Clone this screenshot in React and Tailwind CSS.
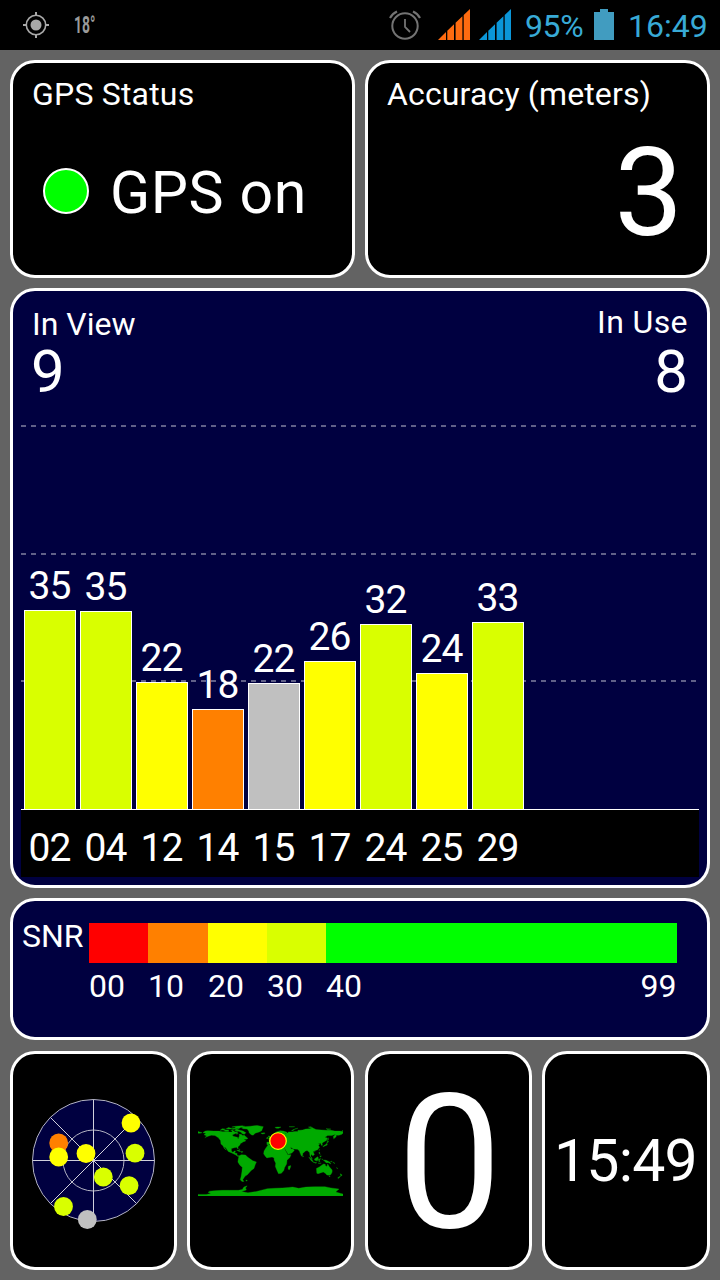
import React from 'react';

const SATELLITES = [
  { id: '02', snr: 35, height: 199, color: 'bg-[#d9ff00]' },
  { id: '04', snr: 35, height: 198, color: 'bg-[#d9ff00]' },
  { id: '12', snr: 22, height: 127, color: 'bg-[#ffff00]' },
  { id: '14', snr: 18, height: 100, color: 'bg-[#ff8000]' },
  { id: '15', snr: 22, height: 126, color: 'bg-[#c0c0c0]' },
  { id: '17', snr: 26, height: 148, color: 'bg-[#ffff00]' },
  { id: '24', snr: 32, height: 185, color: 'bg-[#d9ff00]' },
  { id: '25', snr: 24, height: 136, color: 'bg-[#ffff00]' },
  { id: '29', snr: 33, height: 187, color: 'bg-[#d9ff00]' },
];

const SNR_SCALE = [
  { label: '00', width: 'w-[59px]', color: 'bg-[#ff0000]' },
  { label: '10', width: 'w-[60px]', color: 'bg-[#ff8000]' },
  { label: '20', width: 'w-[59px]', color: 'bg-[#ffff00]' },
  { label: '30', width: 'w-[59px]', color: 'bg-[#d9ff00]' },
  { label: '40', width: 'w-[350.5px]', color: 'bg-[#00ff00]', end: '99' },
];

const SKY_DOTS = [
  { x: 37.5, y: -37.5, color: '#ffff00' },
  { x: -34.8, y: -17.5, color: '#ff8000' },
  { x: -34.8, y: -3.5, color: '#ffff00' },
  { x: -7.5, y: -7, color: '#ffff00' },
  { x: 41.5, y: -7.3, color: '#d9ff00' },
  { x: 9.8, y: 16.5, color: '#d9ff00' },
  { x: 35.6, y: 25.1, color: '#d9ff00' },
  { x: -30, y: 46, color: '#d9ff00' },
  { x: -6.2, y: 59, color: '#c0c0c0' },
];

// Longitude / negated latitude outlines.
const LAND = [
  // North America
  'M-168 -66 -162 -70 -156 -71 -141 -70 -128 -70 -115 -68 -108 -68 -96 -68 -94 -72 -88 -68 -82 -69 -81 -67 -87 -64 -94 -61 -94 -58 -88 -56 -82 -55 -81 -52 -79 -51 -79 -55 -77 -58 -78 -62 -73 -62 -69 -59 -65 -60 -61 -56 -56 -52 -60 -50 -66 -50 -64 -48 -61 -46 -66 -44 -70 -43 -70 -41 -74 -40 -76 -36 -81 -31 -80 -26 -82 -27 -84 -30 -90 -29 -97 -27 -97 -21 -94 -18 -91 -19 -90 -21 -87 -21 -89 -16 -83 -15 -83 -10 -78 -9 -80 -7 -86 -11 -92 -14 -96 -16 -105 -20 -109 -26 -113 -31 -115 -30 -110 -23 -115 -28 -118 -34 -123 -38 -124 -47 -130 -54 -138 -59 -147 -60 -153 -58 -163 -54 -158 -58 -165 -61 -160 -65Z',
  // Canadian Arctic
  'M-125 -72 -120 -76 -112 -75 -116 -73Z M-117 -70 -112 -73 -104 -73 -104 -69 -112 -69Z M-110 -76 -104 -79 -98 -77 -96 -75 -104 -75Z M-97 -77 -88 -77 -80 -74 -92 -75Z M-96 -80 -86 -82 -70 -83 -64 -82 -74 -79 -79 -76 -87 -77 -88 -80Z M-99 -72 -92 -74 -94 -71Z M-89 -71 -86 -74 -78 -73 -68 -70 -61 -66 -65 -62 -71 -64 -73 -67 -81 -70Z M-85 -65 -80 -64 -84 -62Z',
  // Greenland, Iceland
  'M-72 -78 -66 -81 -50 -82 -33 -84 -18 -81 -20 -76 -22 -71 -28 -68 -38 -65 -43 -60 -48 -61 -53 -66 -54 -70 -58 -75 -68 -76Z M-24 -65 -15 -66 -14 -64 -20 -63Z',
  // Caribbean
  'M-84 -23 -78 -23 -74 -20 -78 -20Z M-73 -20 -68 -19 -72 -17Z M-78 -26 -76 -25 -76 -24Z',
  // South America
  'M-78 -9 -72 -12 -62 -11 -57 -6 -50 -1 -44 3 -35 6 -38 13 -41 22 -48 27 -54 34 -58 38 -62 40 -65 44 -69 50 -66 54 -71 54 -75 50 -73 42 -71 30 -70 19 -76 14 -81 6 -80 -1Z M-61 51 -58 51 -58 53 -61 53Z',
  // Africa
  'M-6 -36 -1 -36 10 -37 11 -34 19 -30 23 -33 32 -31 35 -28 37 -22 43 -12 51 -12 48 -5 41 2 40 11 35 20 33 27 27 34 20 35 17 29 12 17 13 9 9 1 9 -4 4 -6 -4 -5 -9 -4 -13 -8 -17 -14 -16 -21 -11 -29Z M50 15 50 18 47 25 44 24 44 17Z',
  // Eurasia
  'M-9 -37 -9 -43 -2 -43 -4 -48 3 -51 8 -54 9 -57 12 -54 20 -55 24 -58 29 -60 22 -60 25 -65 21 -64 17 -61 16 -56 11 -59 5 -59 6 -62 14 -68 24 -71 32 -70 41 -67 40 -65 34 -66 38 -64 44 -66 44 -68 54 -68 60 -69 68 -69 68 -72 73 -72 80 -73 87 -75 98 -76 104 -78 113 -74 126 -73 139 -72 150 -72 160 -70 171 -70 180 -69 180 -65 177 -62 170 -60 163 -60 163 -56 157 -51 156 -57 162 -62 152 -59 142 -59 135 -55 141 -53 139 -47 132 -43 128 -40 129 -35 126 -35 125 -40 118 -39 122 -37 119 -35 122 -30 117 -24 108 -21 106 -19 109 -12 105 -9 101 -13 100 -8 104 -1 101 -3 98 -9 97 -17 91 -22 87 -21 80 -15 80 -11 77 -8 73 -17 72 -21 67 -25 57 -26 50 -30 51 -26 56 -26 59 -22 53 -16 44 -13 39 -21 35 -28 34 -31 36 -37 27 -37 26 -40 22 -37 19 -41 13 -45 18 -40 16 -38 10 -44 3 -43 -1 -38 -6 -36Z',
  // British Isles, Svalbard, Novaya Zemlya and other northern islands
  'M-5 -50 1 -51 0 -54 -2 -58 -6 -58 -3 -54Z M-10 -52 -6 -52 -6 -55 -9 -54Z M11 -79 16 -80 26 -80 20 -77 15 -77Z M52 -71 57 -74 68 -77 60 -75 56 -71Z M46 -81 60 -81 52 -80Z M94 -80 100 -81 104 -79 99 -78Z M138 -76 150 -75 142 -74Z M-180 -69 -170 -66 -175 -65 -180 -65Z M178 -71 180 -71 180 -72Z',
  // Japan, Sakhalin
  'M130 -31 132 -34 139 -38 141 -42 145 -44 141 -45 140 -41 141 -36 136 -34Z M142 -46 144 -50 143 -54 142 -51Z',
  // South-east Asia
  'M95 -6 104 1 106 6 101 3Z M105 6 115 8 112 9Z M109 -1 117 -7 119 -4 116 4 110 2Z M119 -1 125 -2 121 1 123 5 120 5Z M131 1 138 2 147 6 150 11 144 8 138 8 134 4Z M120 -18 122 -18 122 -14 124 -13 121 -14Z M122 -8 126 -9 125 -6Z M118 9 126 9 122 10Z M128 -2 129 0 128 1Z M80 -10 82 -7 80 -6Z M110 -20 111 -19 109 -19Z M121 -25 122 -24 121 -22Z M149 5 152 4 151 6Z M154 6 160 9 159 10Z',
  // Australia, Tasmania, New Zealand
  'M114 22 122 18 127 14 132 11 136 12 136 15 140 17 142 11 146 18 153 26 153 31 150 37 146 39 140 38 136 34 131 31 124 33 118 35 115 34Z M145 41 148 41 147 43Z M173 35 178 38 175 41 174 38Z M173 41 174 42 168 47 167 45Z M164 20 167 22 165 22Z',
  // Antarctica
  'M-180 86 -160 86 -148 84 -155 81 -151 78 -140 77 -120 76 -102 76 -80 76 -70 74 -66 68 -58 65 -62 70 -60 75 -72 79 -56 82 -35 79 -20 75 -8 72 10 71 30 70 45 69 55 68 70 71 88 68 110 67 135 67 150 70 170 73 165 77 162 80 175 84 180 85 180 90 -180 90Z',
];

function Card({ className, children }) {
  return (
    <div className={`rounded-[25px] border-[3px] border-white ${className}`}>{children}</div>
  );
}

function SignalIcon({ color }) {
  return (
    <svg width="33" height="32" viewBox="0 0 33 32" fill={color}>
      <path d="M0 31 8 23V31Z M9.3 21.8 16 15.3V31H9.3Z M17.6 13.8 24.4 7.2V31H17.6Z M25.7 6 32 0V31H25.7Z" />
    </svg>
  );
}

function StatusBar() {
  return (
    <div className="flex h-[50px] items-center bg-black pl-[22px] text-[32px] leading-8 text-[#38aad6]">
      <svg width="28" height="28" viewBox="-14 -14 28 28" fill="none" stroke="#a8a8a8">
        <circle r="9.7" strokeWidth="1.6" />
        <circle r="5.5" fill="#a8a8a8" stroke="none" />
        <path d="M0 -13V-10M0 10V13M-13 0H-10M10 0H13" strokeWidth="2" />
      </svg>
      <div className="ml-[24px] w-[40px] origin-left scale-x-[0.58] text-[24px] font-bold text-[#9a9a9a]">
        18°
      </div>
      <svg className="ml-[275px]" width="32" height="32" viewBox="-16 -17 32 32" fill="none" stroke="#737373">
        <circle r="12.7" strokeWidth="2" />
        <path d="M0 -7V1L5 6" strokeWidth="1.8" />
        <path d="M-15 -8Q-12.5 -12.5 -8 -14.5M15 -8Q12.5 -12.5 8 -14.5" strokeWidth="2.2" />
      </svg>
      <div className="ml-[17px] flex gap-2">
        <SignalIcon color="#ff6b10" />
        <SignalIcon color="#0b96d8" />
      </div>
      <div className="ml-[13px] w-[69px] pt-px tracking-[-0.4px] whitespace-nowrap">95%</div>
      <svg width="20" height="32" viewBox="0 0 20 32" fill="#419cc0">
        <path d="M6 0H14V3H20V31H0V3H6Z" />
      </svg>
      <div className="ml-[14px] pt-px whitespace-nowrap">16:49</div>
    </div>
  );
}

function GridLines() {
  return (
    <div className="absolute inset-x-0 top-0 flex flex-col gap-[125.5px]">
      {[0, 1, 2].map((n) => (
        <div
          key={n}
          className="h-[2px] bg-[repeating-linear-gradient(90deg,#606088_0_5px,transparent_5px_10px)]"
        />
      ))}
    </div>
  );
}

function SatelliteChart() {
  return (
    <Card className="h-[600px] bg-[#000040] px-2">
      <div className="flex h-[134px] justify-between px-[11px] text-white">
        <div className="pt-[17px]">
          <div className="text-[32px] leading-8">In View</div>
          <div className="-ml-px pt-px text-[60px] leading-[62px]">9</div>
        </div>
        <div className="pt-[15px] text-right">
          <div className="text-[32px] leading-8 tracking-[0.4px]">In Use</div>
          <div className="pt-[3px] text-[60px] leading-[62px]">8</div>
        </div>
      </div>
      <div className="relative h-[385px] w-[678px] border-b border-white">
        <GridLines />
        <div className="relative flex h-full items-end gap-1 pl-[3px]">
          {SATELLITES.map((sat) => (
            <div key={sat.id} className="w-[52px] text-[39px] leading-10 tracking-[-0.8px] text-white">
              <div className="mb-[4px] flex justify-center pr-px">{sat.snr}</div>
              <div
                className={`border border-b-0 border-white ${sat.color}`}
                style={{ height: sat.height }}
              />
            </div>
          ))}
        </div>
      </div>
      <div className="flex h-[67px] w-[678px] gap-1 bg-black pt-[18px] pl-[3px] text-[39px] leading-10 tracking-[-0.8px] text-white">
        {SATELLITES.map((sat) => (
          <div key={sat.id} className="w-[52px] pr-px text-center">{sat.id}</div>
        ))}
      </div>
    </Card>
  );
}

function SnrLegend() {
  return (
    <Card className="flex h-[142px] bg-[#000040] pt-[19px] pl-[9px] text-[32px] leading-8 text-white">
      <div className="w-[67px]">SNR</div>
      <div className="flex pt-[3px]">
        {SNR_SCALE.map((step) => (
          <div key={step.label} className={step.width}>
            <div className={`h-10 ${step.color}`} />
            <div className="flex justify-between pt-[7px]">
              <span>{step.label}</span>
              {step.end && <span>{step.end}</span>}
            </div>
          </div>
        ))}
      </div>
    </Card>
  );
}

function SkyView() {
  return (
    <svg width="141" height="141" viewBox="-70.5 -70.5 141 141">
      <circle r="61" fill="#000040" stroke="#b4b4c4" />
      <circle r="30.5" fill="none" stroke="#b4b4c4" />
      <path d="M0 -61V61M-61 0H61M-43 -43 43 43M-43 43 43 -43" stroke="#d0d0dc" />
      {SKY_DOTS.map((dot, i) => (
        <circle key={i} cx={dot.x} cy={dot.y} r="9.4" fill={dot.color} />
      ))}
    </svg>
  );
}

function WorldMap() {
  return (
    <svg width="145" height="73" viewBox="-180 -90 360 180" preserveAspectRatio="none">
      <g fill="#00aa00" stroke="#00aa00" strokeWidth="0.8">
        {LAND.map((d, i) => (
          <path key={i} d={d} />
        ))}
      </g>
      <circle cx="18.7" cy="-45.5" r="20.5" fill="#ff0000" stroke="#ffff00" strokeWidth="3" />
    </svg>
  );
}

export default function App() {
  return (
    <div className="h-[1280px] w-[720px] overflow-hidden bg-[#636363] font-['Roboto',sans-serif]">
      <StatusBar />
      <div className="flex flex-col gap-[10px] p-[10px]">
        <div className="grid grid-cols-2 gap-[10px]">
          <Card className="h-[218px] bg-black px-[19px] pt-[15px] text-white">
            <div className="text-[32px] leading-8 tracking-[0.2px]">GPS Status</div>
            <div className="mt-[52px] flex items-start gap-[21px] pl-[11px]">
              <div className="mt-[6px] size-[46px] rounded-full border-2 border-white bg-[#00ff00]" />
              <div className="text-[59px] leading-[62px] tracking-[0.6px] whitespace-nowrap">GPS on</div>
            </div>
          </Card>
          <Card className="h-[218px] bg-black px-[19px] pt-[15px] text-white">
            <div className="text-[32px] leading-8 tracking-[0.15px]">Accuracy (meters)</div>
            <div className="mt-[22px] pr-[5px] text-right text-[122px] leading-[124px]">3</div>
          </Card>
        </div>
        <SatelliteChart />
        <SnrLegend />
        <div className="mt-px grid grid-cols-[167px_167px_167px_168px] gap-x-[10.33px]">
          <Card className="flex h-[219px] items-center justify-center bg-black pb-px">
            <SkyView />
          </Card>
          <Card className="flex h-[219px] items-center justify-center bg-black pr-px pb-[2px]">
            <WorldMap />
          </Card>
          <Card className="flex h-[219px] justify-center bg-black pt-[16px] pl-[3px] text-[187px] leading-[188px] text-white">
            0
          </Card>
          <Card className="h-[219px] bg-black pt-[77px] pl-[9px]">
            <div className="text-[59px] leading-[60px] tracking-[-0.8px] whitespace-nowrap text-white">15:49</div>
          </Card>
        </div>
      </div>
    </div>
  );
}
